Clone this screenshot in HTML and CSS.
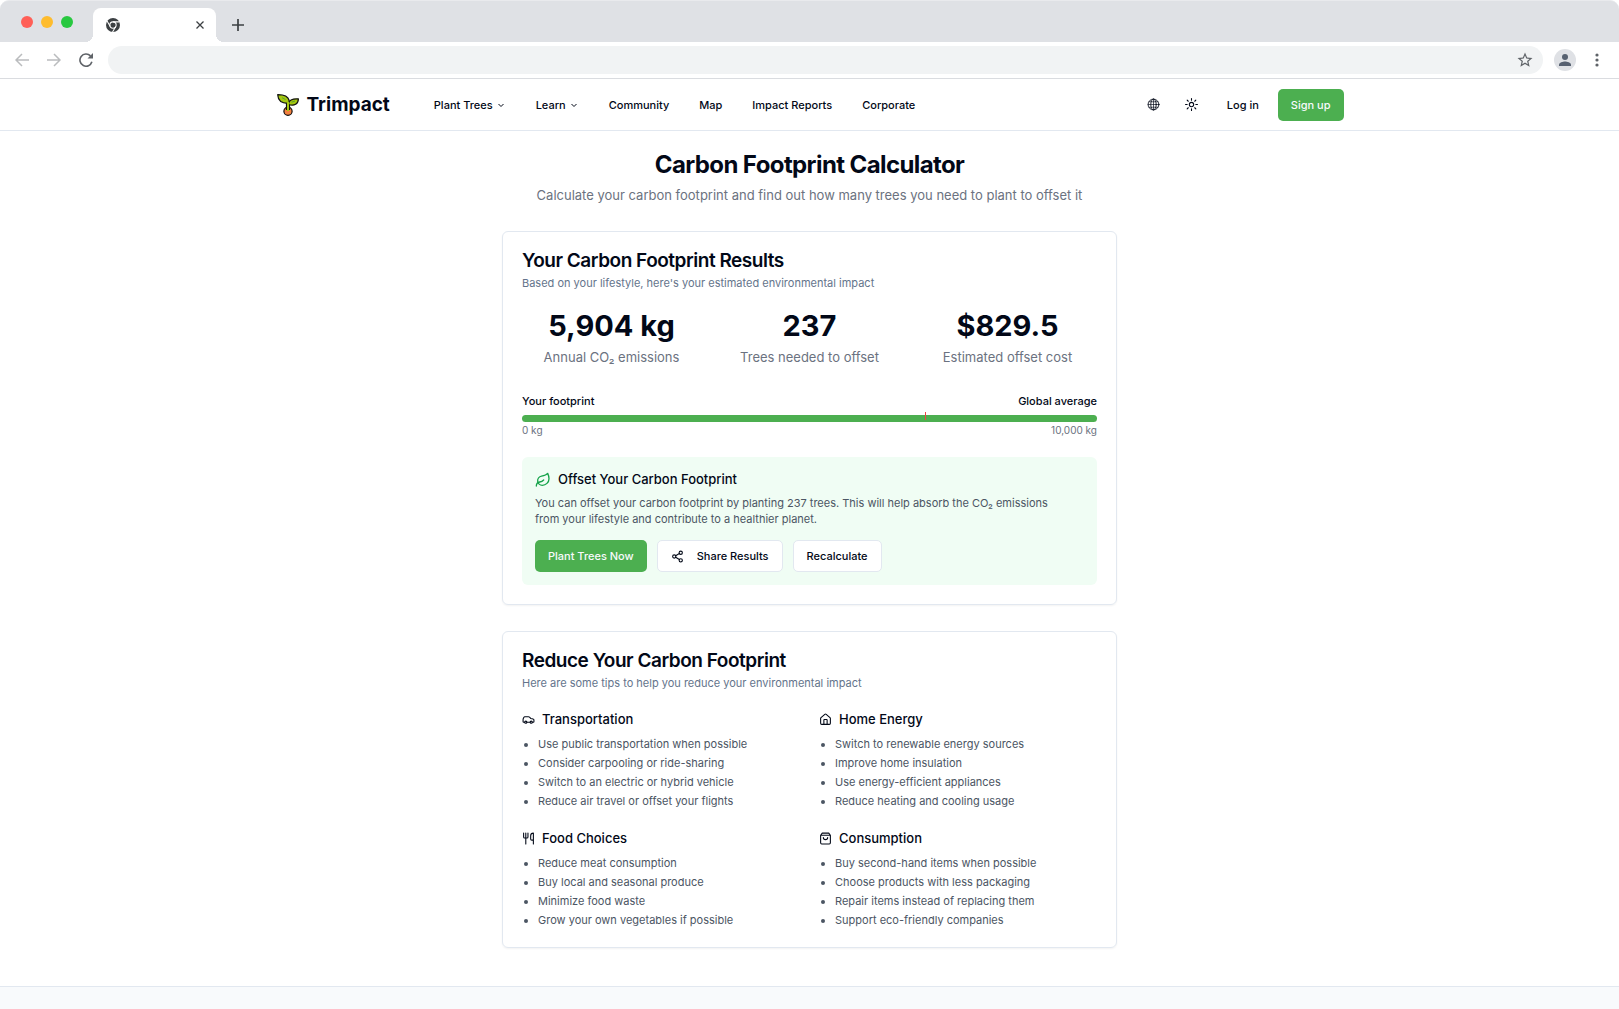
FILE: index.html
```html
<!DOCTYPE html>
<html lang="en">
<head>
<meta charset="utf-8">
<meta name="viewport" content="width=device-width, initial-scale=1">
<title>Carbon Footprint Calculator</title>
<link rel="stylesheet" href="styles.css">
</head>
<body>
<div class="browser">
  <div class="tabs">
    <div class="lights"><span class="light red"></span><span class="light amber"></span><span class="light green"></span></div>
    <div class="tab">
      <svg class="favicon" viewBox="0 0 24 24" aria-hidden="true"><circle cx="12" cy="12" r="12" fill="#3c4043"/><circle cx="12" cy="12" r="5.4" fill="none" stroke="#fff" stroke-width="1.8"/><path d="M12 6.6H23M7.3 14.7 1.8 5.2M16.7 14.7 11.2 24" stroke="#fff" stroke-width="1.8"/></svg>
      <button class="plain" aria-label="Close tab"><svg width="8" height="8" viewBox="0 0 8 8"><path d="M.5.5l7 7M7.500.5l-7 7" stroke="#3c4043" stroke-width="1.3"/></svg></button>
    </div>
    <button class="plain new-tab" aria-label="New tab"><svg width="12" height="12" viewBox="0 0 12 12"><path d="M6 0v12M0 6h12" stroke="#3c4043" stroke-width="1.700"/></svg></button>
  </div>
  <div class="toolbar">
    <button class="plain" aria-label="Back"><svg width="14" height="14" viewBox="0 0 14 14" fill="none" stroke="#babcbe" stroke-width="1.5"><path d="M14 7H1.500M7 1 1 7l6 6"/></svg></button>
    <button class="plain" aria-label="Forward"><svg width="14" height="14" viewBox="0 0 14 14" fill="none" stroke="#babcbe" stroke-width="1.5"><path d="M0 7h12.500M7 1l6 6-6 6"/></svg></button>
    <button class="plain" aria-label="Reload"><svg width="14" height="14" viewBox="0 0 14 14"><path d="M12.900 8.800A6.100 6.100 0 1 1 11.500 2.900" fill="none" stroke="#5f6368" stroke-width="1.600"/><path d="M14 0v5.500H8.500z" fill="#5f6368"/></svg></button>
    <div class="omnibox">
      <input class="address" type="text" aria-label="Address">
      <button class="plain" aria-label="Bookmark"><svg width="18" height="18" viewBox="0 0 24 24" fill="#5f6368"><path d="m22 9.240-7.190-.62L12 2 9.190 8.630 2 9.240l5.460 4.730L5.820 21 12 17.270 18.180 21l-1.630-7.030L22 9.240zM12 15.400l-3.760 2.270 1-4.280-3.320-2.880 4.380-.38L12 6.100l1.710 4.040 4.380.38-3.320 2.880 1 4.280L12 15.400z"/></svg></button>
    </div>
    <button class="plain" aria-label="Profile"><svg width="22" height="22" viewBox="0 0 22 22"><circle cx="11" cy="11" r="11" fill="#dfe1e5"/><circle cx="11" cy="8" r="3" fill="#566070"/><path d="M5 17v-1.500c0-2 4-3.100 6-3.100s6 1.100 6 3.100V17z" fill="#566070"/></svg></button>
    <button class="plain" aria-label="Menu"><svg width="4" height="14" viewBox="0 0 4 14" fill="#5f6368"><circle cx="2" cy="2" r="1.600"/><circle cx="2" cy="7" r="1.600"/><circle cx="2" cy="12" r="1.600"/></svg></button>
  </div>
</div>

<header class="header">
  <div class="container">
    <a class="logo" href="#">
      <svg width="22" height="22" viewBox="0 0 22 22" aria-hidden="true" stroke-linejoin="round"><g stroke="#111" stroke-width="1.200"><circle cx="11" cy="17.300" r="4.100" fill="#f4813f"/><path d="M9.500 16V9h3v7" fill="#a5c80f"/><path d="M10.800 9.300C4.500 9.300 1 6 .7.700 7 .6 11 2.500 12.200 6.500z" fill="#a5c80f"/><path d="M11.500 10.500c0-4 3.500-6 9.900-5.600-.2 5-4 7.600-9.900 5.600z" fill="#a5c80f"/></g><path d="M5 3.700l3.500 1.800M18 7l-3.500 1.200" stroke="#5c9e31" stroke-width="1"/><path d="M11 7.500v9.500" stroke="#a5c80f" stroke-width="2"/></svg>
      <span>Trimpact</span>
    </a>
    <nav class="nav" aria-label="Main">
      <button class="nav-item">Plant Trees <svg class="chevron" viewBox="0 0 10 10"><path d="M2.500 4 5 6.500 7.500 4"/></svg></button>
      <button class="nav-item">Learn <svg class="chevron" viewBox="0 0 10 10"><path d="M2.500 4 5 6.500 7.500 4"/></svg></button>
      <a class="nav-item" href="#">Community</a>
      <a class="nav-item" href="#">Map</a>
      <a class="nav-item" href="#">Impact Reports</a>
      <a class="nav-item" href="#">Corporate</a>
    </nav>
    <div class="actions">
      <button class="icon-button" aria-label="Language"><svg class="icon thin" viewBox="0 0 24 24"><circle cx="12" cy="12" r="10"/><ellipse cx="12" cy="12" rx="5" ry="10"/><path d="M12 2v20M2 12h20M4 7h16M4 17h16" stroke-width="1.200"/></svg></button>
      <button class="icon-button" aria-label="Theme"><svg class="icon" viewBox="0 0 24 24"><circle cx="12" cy="12" r="4"/><path d="M12 1v3M12 20v3M4 4l2 2M18 18l2 2M1 12h3M20 12h3M6 18l-2 2M20 4l-2 2"/></svg></button>
      <a class="login" href="#">Log in</a>
      <button class="button primary">Sign up</button>
    </div>
  </div>
</header>

<main class="main">
  <div class="intro">
    <h1>Carbon Footprint Calculator</h1>
    <p>Calculate your carbon footprint and find out how many trees you need to plant to offset it</p>
  </div>

  <section class="card">
    <h2>Your Carbon Footprint Results</h2>
    <p class="description">Based on your lifestyle, here's your estimated environmental impact</p>
    <div class="stats">
      <div><p class="value">5,904 kg</p><p class="label">Annual CO₂ emissions</p></div>
      <div><p class="value">237</p><p class="label">Trees needed to offset</p></div>
      <div><p class="value">$829.5</p><p class="label">Estimated offset cost</p></div>
    </div>
    <div class="row legend"><span>Your footprint</span><span>Global average</span></div>
    <div class="meter" role="progressbar" aria-label="Your footprint" aria-valuenow="100"><span class="average" style="left: 70%"></span></div>
    <div class="row range"><span>0 kg</span><span>10,000 kg</span></div>
    <div class="offset">
      <h3><svg class="leaf" viewBox="0 0 24 24"><path d="M11 20A7 7 0 0 1 9.800 6.100C15.500 5 17 4.480 19 2c1 2 2 4.180 2 8 0 5.500-4.780 10-10 10Z"/><path d="M2 21c0-3 1.850-5.360 5.080-6C9.500 14.520 12 13 13 12"/></svg>Offset Your Carbon Footprint</h3>
      <p>You can offset your carbon footprint by planting 237 trees. This will help absorb the CO₂ emissions from your lifestyle and contribute to a healthier planet.</p>
      <div class="buttons">
        <button class="button primary">Plant Trees Now</button>
        <button class="button outline"><svg class="icon" viewBox="0 0 24 24"><circle cx="18" cy="5" r="3"/><circle cx="6" cy="12" r="3"/><circle cx="18" cy="19" r="3"/><path d="m8.590 13.510 6.830 3.980M15.410 6.510l-6.820 3.980"/></svg>Share Results</button>
        <button class="button outline">Recalculate</button>
      </div>
    </div>
  </section>

  <section class="card">
    <h2>Reduce Your Carbon Footprint</h2>
    <p class="description">Here are some tips to help you reduce your environmental impact</p>
    <div class="tips">
      <div>
        <h3><svg class="icon" viewBox="0 0 24 24"><path d="M19 17h2c.6 0 1-.4 1-1v-3c0-.9-.7-1.700-1.500-1.900C18.700 10.600 16 10 16 10s-1.300-1.400-2.200-2.300c-.5-.4-1.100-.7-1.800-.7H5c-.6 0-1.100.4-1.400.9l-1.400 2.900A3.700 3.700 0 0 0 2 12v4c0 .6.4 1 1 1h2"/><circle cx="7" cy="17" r="2"/><path d="M9 17h6"/><circle cx="17" cy="17" r="2"/></svg>Transportation</h3>
        <ul><li>Use public transportation when possible</li><li>Consider carpooling or ride-sharing</li><li>Switch to an electric or hybrid vehicle</li><li>Reduce air travel or offset your flights</li></ul>
      </div>
      <div>
        <h3><svg class="icon" viewBox="0 0 24 24"><path d="M15 21v-8a1 1 0 0 0-1-1h-4a1 1 0 0 0-1 1v8"/><path d="M3 10a2 2 0 0 1 .709-1.528l7-5.999a2 2 0 0 1 2.582 0l7 5.999A2 2 0 0 1 21 10v9a2 2 0 0 1-2 2H5a2 2 0 0 1-2-2z"/></svg>Home Energy</h3>
        <ul><li>Switch to renewable energy sources</li><li>Improve home insulation</li><li>Use energy-efficient appliances</li><li>Reduce heating and cooling usage</li></ul>
      </div>
      <div>
        <h3><svg class="icon" viewBox="0 0 24 24"><path d="M3 2v7c0 1.100.9 2 2 2h4a2 2 0 0 0 2-2V2M7 2v20M21 15V2a5 5 0 0 0-5 5v6c0 1.100.9 2 2 2h3Zm0 0v7"/></svg>Food Choices</h3>
        <ul><li>Reduce meat consumption</li><li>Buy local and seasonal produce</li><li>Minimize food waste</li><li>Grow your own vegetables if possible</li></ul>
      </div>
      <div>
        <h3><svg class="icon" viewBox="0 0 24 24"><path d="M6 2 3 6v14a2 2 0 0 0 2 2h14a2 2 0 0 0 2-2V6l-3-4ZM3 6h18M16 10a4 4 0 0 1-8 0"/></svg>Consumption</h3>
        <ul><li>Buy second-hand items when possible</li><li>Choose products with less packaging</li><li>Repair items instead of replacing them</li><li>Support eco-friendly companies</li></ul>
      </div>
    </div>
  </section>
</main>
<footer class="footer"></footer>
</body>
</html>
```
FILE: styles.css
```css
* { box-sizing: border-box; margin: 0; padding: 0; }
body {
  min-height: 100vh;
  display: flex;
  flex-direction: column;
  background: #fff;
  color: #020817;
  font: 11px/16px Inter, "Liberation Sans", sans-serif;
}
button, input { font: inherit; color: inherit; border: 0; background: none; }
button { cursor: pointer; }
a { color: inherit; text-decoration: none; }
svg { display: block; flex: none; }

/* Browser window frame */
.browser { border-bottom: 1px solid #dadce0; }
.tabs {
  display: flex;
  height: 42px;
  padding: 7px 0 0 21px;
  border-top: 1px solid #e9eaed;
  border-top-left-radius: 9px;
  border-top-right-radius: 9px;
  background: #dfe1e5;
}
.lights { display: flex; gap: 8px; padding-top: 8px; }
.light { width: 12px; height: 12px; border-radius: 50%; }
.red { background: #ff5f57; }
.amber { background: #febc2e; }
.green { background: #28c840; }
.tab {
  position: relative;
  display: flex;
  align-items: center;
  justify-content: space-between;
  width: 123px;
  margin-left: 20px;
  padding: 0 12px 0 13px;
  border-radius: 8px 8px 0 0;
  background: #fff;
}
.tab::before, .tab::after {
  content: "";
  position: absolute;
  bottom: 0;
  width: 8px;
  height: 8px;
}
.tab::before { left: -8px; background: radial-gradient(circle at 0 0, transparent 8px, #fff 8px); }
.tab::after { right: -8px; background: radial-gradient(circle at 100% 0, transparent 8px, #fff 8px); }
.favicon { width: 14px; height: 14px; }
.new-tab { margin-left: 16px; }
.toolbar { display: flex; align-items: center; gap: 18px; height: 36px; padding: 0 20px 0 15px; }
.toolbar > :last-child { margin-left: 1px; }
.omnibox {
  display: flex;
  flex: 1;
  align-items: center;
  height: 28px;
  margin: 0 -7px 0 -3px;
  padding: 0 9px 0 14px;
  border-radius: 14px;
  background: #f1f3f4;
}
.address { flex: 1; outline: none; }

/* Site header */
.header { border-bottom: 1px solid #e2e8f0; }
.container { display: flex; align-items: center; max-width: 1120px; height: 51px; margin: 0 auto; padding: 0 26px; }
.logo { display: flex; align-items: center; gap: 8px; padding-left: 1px; font-size: 19px; font-weight: 700; }
.nav { display: flex; gap: 30px; margin-left: 44px; font-weight: 500; }
.nav-item { display: flex; align-items: center; gap: 3px; white-space: nowrap; }
.chevron { width: 10px; height: 10px; fill: none; stroke: currentColor; }
.actions { display: flex; align-items: center; margin-left: auto; font-weight: 500; }
.icon { width: 13px; height: 13px; fill: none; stroke: currentColor; stroke-width: 2; stroke-linecap: round; stroke-linejoin: round; }
.thin { stroke-width: 1.6; }
.icon-button { display: grid; place-items: center; width: 32px; height: 32px; margin-right: 6px; }
.login { padding: 0 19px 0 13px; }
.button { display: flex; align-items: center; height: 32px; padding: 0 13px; border-radius: 5px; font-weight: 500; white-space: nowrap; }
.primary { background: #4caf50; color: #f8fafc; }
.outline { gap: 13px; border: 1px solid #e2e8f0; background: #fff; }

/* Page content */
.main { width: 100%; max-width: 615px; margin: 0 auto; padding: 19px 0 38px; }
.intro { margin-bottom: 26px; text-align: center; }
h1 { font-size: 24px; line-height: 29px; font-weight: 700; letter-spacing: -0.025em; }
.intro p { margin-top: 7px; color: #6b7280; font-size: 13px; line-height: 19px; }
.card { padding: 19px; border: 1px solid #e2e8f0; border-radius: 6px; box-shadow: 0 1px 2px rgb(0 0 0 / 5%); }
.card + .card { margin-top: 26px; }
h2 { font-size: 19px; line-height: 19px; font-weight: 600; letter-spacing: -0.025em; }
h3 { display: flex; align-items: center; gap: 7px; font-size: 13px; line-height: 19px; font-weight: 500; }
.description { margin-top: 5px; color: #64748b; }
.stats { display: grid; grid-template-columns: repeat(3, 1fr); gap: 19px; margin: 19px 0 26px; text-align: center; }
.value { font-size: 29px; line-height: 32px; font-weight: 700; }
.label { margin-top: 6px; color: #6b7280; font-size: 13px; line-height: 19px; }
.row { display: flex; justify-content: space-between; }
.legend { font-weight: 500; }
.meter { position: relative; height: 7px; margin: 6px 0 2px; border-radius: 4px; background: #4caf50; }
.average { position: absolute; top: -3px; width: 1px; height: 8px; background: #ef4444; }
.range { color: #6b7280; font-size: 10px; line-height: 13px; }
.offset { margin-top: 20px; padding: 13px; border-radius: 6px; background: #f0fdf4; }
.leaf { width: 16px; height: 16px; fill: none; stroke: #16a34a; stroke-width: 2; stroke-linecap: round; stroke-linejoin: round; }
.offset p { max-width: 530px; margin: 6px 0 13px; color: #4b5563; }
.buttons { display: flex; gap: 10px; }
.tips { display: grid; grid-template-columns: 1fr 1fr; gap: 20px 19px; margin-top: 19px; }
.tips ul { display: grid; gap: 3px; margin-top: 7px; padding-left: 16px; color: #4b5563; }

.footer { flex: 1; border-top: 1px solid #e2e8f0; background: #f8fafc; }
```
